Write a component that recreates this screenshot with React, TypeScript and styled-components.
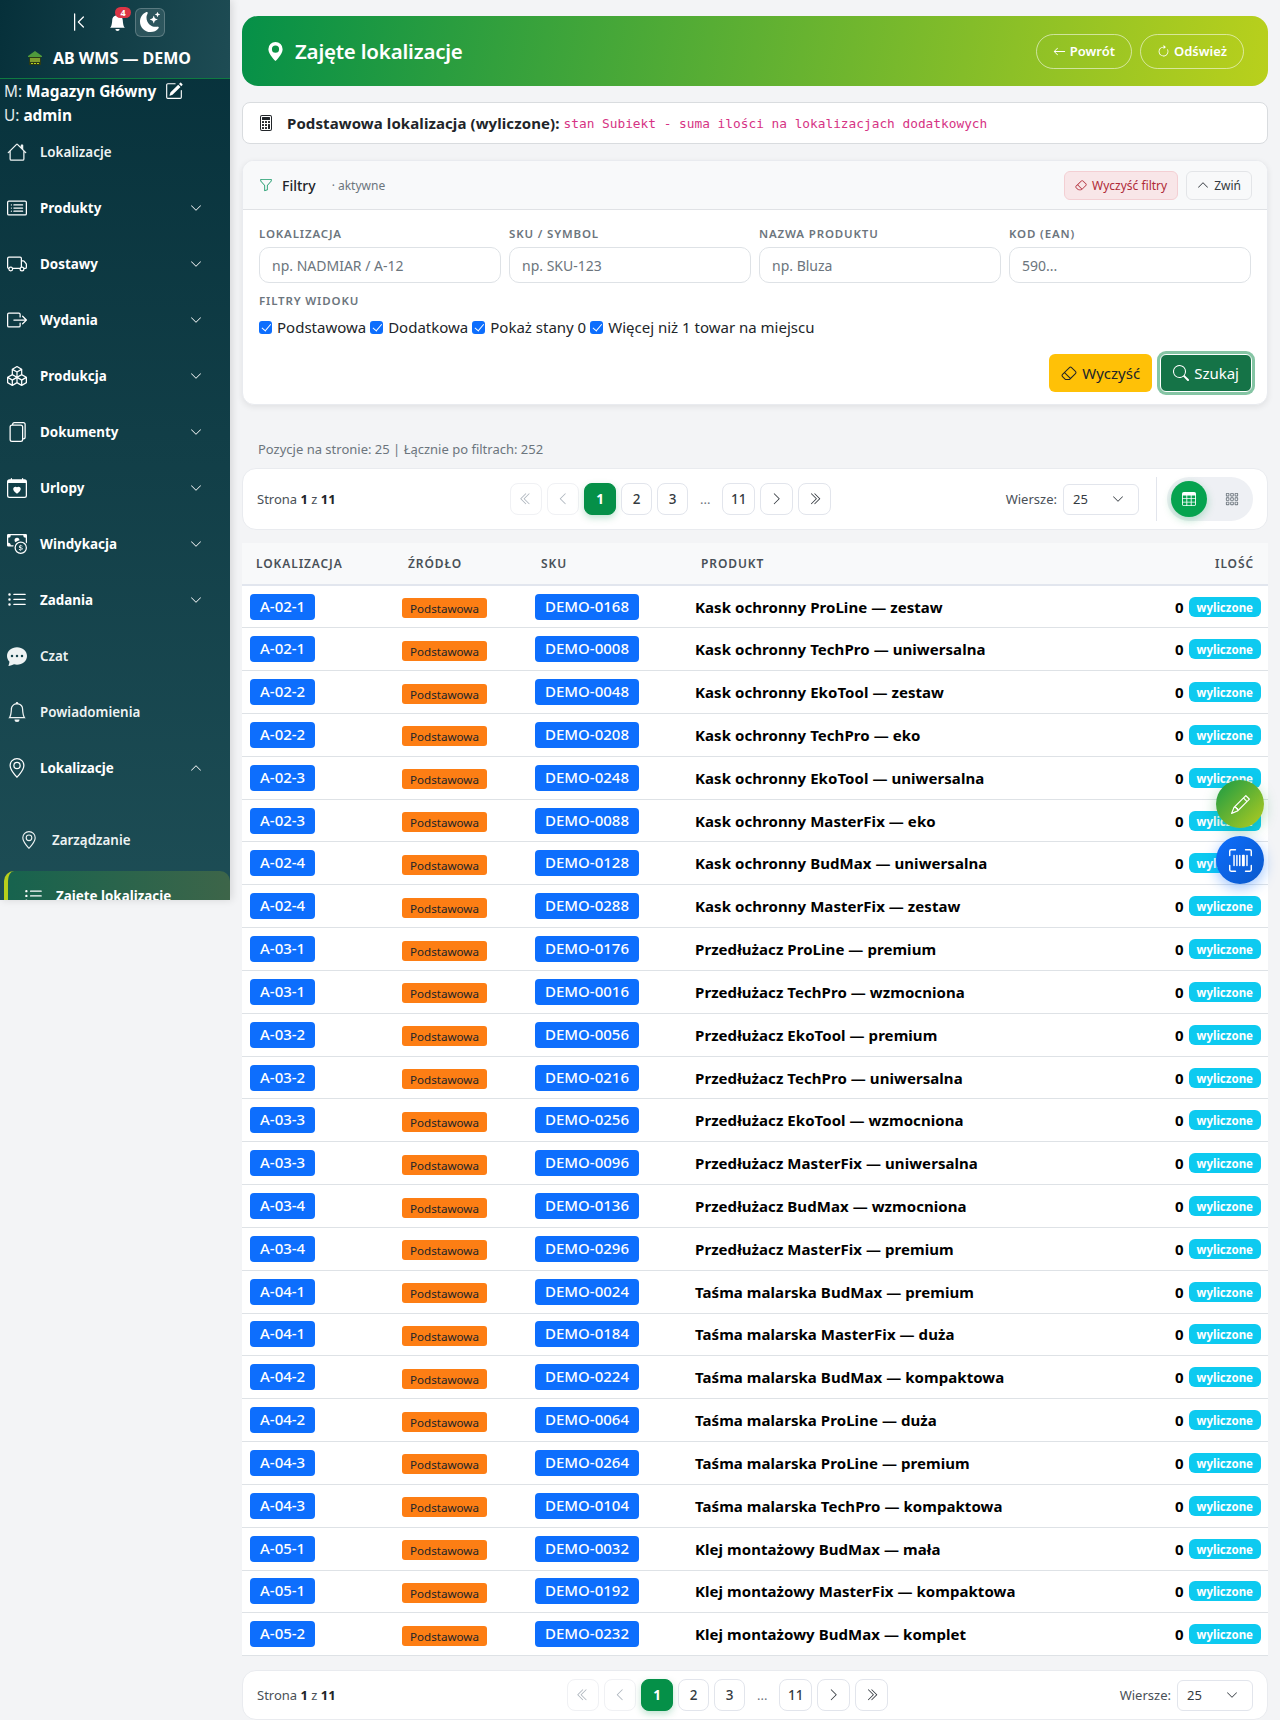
import React from 'react'
import styled, { createGlobalStyle } from 'styled-components'
import {
  BsArrowClockwise, BsArrowLeft, BsBell, BsBellFill, BsBoxArrowRight, BsBoxes, BsCalculator, BsCalendarHeart,
  BsCardList, BsCashCoin, BsChatDotsFill, BsChevronBarLeft, BsChevronDoubleLeft, BsChevronDoubleRight, BsChevronDown,
  BsChevronLeft, BsChevronRight, BsChevronUp, BsEraser, BsFiles, BsFunnel, BsGeoAlt, BsGeoAltFill, BsGrid3X3Gap,
  BsHouse, BsListUl, BsMoonStarsFill, BsPencil, BsPencilSquare, BsSearch, BsTable, BsTruck, BsUpcScan,
} from 'react-icons/bs'

const font = `'Noto Sans', 'Open Sans', Arial, sans-serif`

const GlobalStyle = createGlobalStyle`
  html, body { margin: 0; padding: 0; background: #f3f4f6; }
  body { font-family: ${font}; color: #212529; }
  * { box-sizing: border-box; }
`

const Page = styled.div`
  position: relative;
  width: 1280px;
  height: 1720px;
  overflow: hidden;
  padding: 16px 12px 0 242px;
  background: #f3f4f6;
`

const Sidebar = styled.aside`
  position: absolute;
  top: 0;
  left: 0;
  width: 230px;
  height: 900px;
  overflow: hidden;
  color: #fff;
  background: linear-gradient(180deg, #06303a 0%, #1d4d55 100%);
  box-shadow: 2px 0 8px rgba(0, 0, 0, 0.12);
`

const SideHead = styled.div`
  height: 79px;
  background: linear-gradient(100deg, #06303a 0%, #1e4c54 100%);
  border-bottom: 1px solid #0f7a41;
  display: flex;
  flex-direction: column;
  align-items: center;
`

const HeadTools = styled.div`
  display: flex;
  align-items: center;
  height: 44px;
  margin-left: 4px;
  font-size: 20px;
`

const Bell = styled.span`
  position: relative;
  display: flex;
  margin: 0 9px 0 20px;
  font-size: 17px;
`

const BellBadge = styled.span`
  position: absolute;
  top: -7px;
  left: 6px;
  min-width: 16px;
  height: 11px;
  border-radius: 7px;
  background: #dc3545;
  color: #fff;
  font-size: 9px;
  font-weight: 700;
  line-height: 11px;
  text-align: center;
`

const ThemeButton = styled.span`
  width: 30px;
  height: 29px;
  border-radius: 6px;
  border: 1px solid rgba(255, 255, 255, 0.22);
  background: rgba(255, 255, 255, 0.1);
  display: flex;
  align-items: center;
  justify-content: center;
  font-size: 20px;
`

const Brand = styled.div`
  display: flex;
  align-items: center;
  gap: 10px;
  font-size: 16px;
  font-weight: 700;
  margin: 3px 12px 0 0;
`

const UserLine = styled.div`
  display: flex;
  align-items: center;
  gap: 9px;
  padding-left: 4px;
  height: 24px;
  font-size: 15.4px;
  color: #e4ebec;
  b { color: #fff; font-weight: 700; }
  svg { font-size: 18px; color: #fff; }
`

const UserBlock = styled.div`
  height: 45px;
`

const MenuItem = styled.div<{ $bold?: boolean }>`
  display: flex;
  align-items: center;
  height: 56px;
  padding: 0 28px 0 7px;
  font-size: 13.4px;
  font-weight: ${(p) => (p.$bold ? 700 : 600)};
  color: ${(p) => (p.$bold ? '#fff' : '#eef3f3')};
`

const MenuIcon = styled.span`
  width: 20px;
  display: flex;
  justify-content: center;
  margin-right: 13px;
  font-size: 20px;
  flex: none;
`

const MenuLabel = styled.span`
  flex: 1;
`

const Chevron = styled.span`
  display: flex;
  font-size: 12px;
`

const SubItem = styled.div`
  display: flex;
  align-items: center;
  gap: 14px;
  height: 56px;
  margin-top: 16px;
  padding-left: 20px;
  font-size: 13.4px;
  font-weight: 600;
  color: #eef3f3;
  svg { font-size: 18px; }
`

const ActiveItem = styled.div`
  display: flex;
  align-items: center;
  gap: 13px;
  height: 60px;
  margin: 3px 0 0 4px;
  padding: 0 0 10px 16px;
  border-radius: 10px;
  border-left: 4px solid #b7cf1c;
  background: linear-gradient(90deg, #17634e 0%, #3d6549 100%);
  font-size: 13.4px;
  font-weight: 700;
  svg { font-size: 19px; }
`

const Banner = styled.header`
  height: 70px;
  border-radius: 16px;
  background: linear-gradient(100deg, #059048 0%, #b9d01c 100%);
  display: flex;
  align-items: center;
  justify-content: space-between;
  padding: 0 24px;
  color: #fff;
`

const BannerTitle = styled.h1`
  margin: 0;
  display: flex;
  align-items: center;
  gap: 10px;
  font-size: 20.5px;
  font-weight: 600;
  letter-spacing: -0.2px;
  svg { font-size: 19px; }
`

const BannerActions = styled.div`
  display: flex;
  gap: 8px;
`

const GhostButton = styled.span`
  height: 35px;
  border: 1px solid rgba(255, 255, 255, 0.55);
  border-radius: 18px;
  padding: 0 16px;
  display: flex;
  align-items: center;
  gap: 4px;
  font-size: 13px;
  font-weight: 600;
`

const Notice = styled.div`
  height: 42px;
  margin-top: 16px;
  border: 1px solid #d9dcdf;
  border-radius: 8px;
  background: #fff;
  display: flex;
  align-items: center;
  padding: 0 15px;
  font-size: 15px;
  font-weight: 700;
  letter-spacing: 0.09px;
  color: #212529;
  svg { font-size: 16px; margin-right: 13px; }
  code {
    font-family: 'DejaVu Sans Mono', monospace;
    font-size: 12.8px;
    font-weight: 400;
    letter-spacing: 0;
    color: #d63384;
    margin-left: 4px;
  }
`

const FilterCard = styled.section`
  height: 245px;
  margin-top: 16px;
  border-radius: 12px;
  background: #fff;
  border: 1px solid #e9ebef;
  box-shadow: 0 2px 6px rgba(0, 0, 0, 0.08);
  overflow: hidden;
`

const FilterHead = styled.div`
  height: 49px;
  background: #f8f9fa;
  border-bottom: 1px solid #e0e2e5;
  display: flex;
  align-items: center;
  padding: 0 15px 0 16px;
`

const FilterTitle = styled.span`
  display: flex;
  align-items: center;
  gap: 9px;
  font-size: 14px;
  font-weight: 500;
  svg { font-size: 14px; color: #1a9a6a; }
`

const FilterState = styled.span`
  flex: 1;
  margin-left: 16px;
  font-size: 12px;
  color: #6c757d;
`

const SmallButton = styled.span<{ $danger?: boolean }>`
  height: 29px;
  margin-left: 8px;
  padding: 0 10px;
  display: flex;
  align-items: center;
  gap: 5px;
  border-radius: 6px;
  font-size: 12px;
  color: ${(p) => (p.$danger ? '#b02a37' : '#343a40')};
  background: ${(p) => (p.$danger ? '#f8e6e8' : '#f8f9fa')};
  border: 1px solid ${(p) => (p.$danger ? '#f3cfd3' : '#e3e5e8')};
`

const FilterBody = styled.div`
  padding: 16px 16px 0;
`

const FieldGrid = styled.div`
  display: grid;
  grid-template-columns: repeat(4, 1fr);
  gap: 8px;
`

const FieldLabel = styled.div`
  font-size: 11.5px;
  font-weight: 600;
  letter-spacing: 0.85px;
  color: #6c757d;
  line-height: 15px;
  margin-bottom: 6px;
`

const FieldInput = styled.input`
  display: block;
  width: 100%;
  height: 36px;
  border: 1px solid #dee2e6;
  border-radius: 10px;
  padding: 0 12px;
  font-family: ${font};
  font-size: 14px;
  &::placeholder { color: #6c757d; opacity: 1; }
`

const ViewLabel = styled(FieldLabel)`
  margin: 10px 0 9px;
`

const CheckRow = styled.div`
  display: flex;
  align-items: center;
  gap: 4px;
  font-size: 15px;
  line-height: 20px;
`

const Check = styled.span`
  width: 13px;
  height: 13px;
  margin-right: 1px;
  border-radius: 3px;
  background: #0d6efd;
  position: relative;
  flex: none;
  &::after {
    content: '';
    position: absolute;
    left: 4.5px;
    top: 1.5px;
    width: 4px;
    height: 7.5px;
    border: solid #fff;
    border-width: 0 1.8px 1.8px 0;
    transform: rotate(40deg);
  }
`

const FilterActions = styled.div`
  display: flex;
  justify-content: flex-end;
  gap: 8px;
  margin: 17px -1px 0 0;
`

const SolidButton = styled.span<{ $bg: string; $fg: string; $focus?: boolean }>`
  height: 38px;
  padding: 0 12px;
  display: flex;
  align-items: center;
  gap: 5px;
  border-radius: 6px;
  font-size: 15px;
  background: ${(p) => p.$bg};
  color: ${(p) => p.$fg};
  box-shadow: ${(p) => (p.$focus ? '0 0 0 3px #85c5a4' : 'none')};
  ${(p) => (p.$focus ? 'border: 1px solid #fff;' : '')}
  svg { font-size: 16px; }
`

const InfoLine = styled.div`
  margin: 35px 0 0 16px;
  height: 19px;
  font-size: 13px;
  line-height: 19px;
  color: #6c757d;
`

const PagerCard = styled.div<{ $bottom?: boolean }>`
  height: ${(p) => (p.$bottom ? '50px' : '62px')};
  margin-top: ${(p) => (p.$bottom ? '14px' : '9px')};
  background: #fff;
  border: 1px solid #e9ebef;
  border-radius: 14px;
  display: flex;
  justify-content: space-between;
  align-items: center;
  padding: 0 14px;
`

const PageCount = styled.div`
  font-size: 13px;
  color: #495057;
  b { color: #212529; font-weight: 700; }
`

const Pages = styled.div`
  display: flex;
  align-items: center;
  gap: 5px;
`

const PageBtn = styled.span<{ $active?: boolean; $off?: boolean; $w?: number }>`
  width: ${(p) => p.$w ?? 32}px;
  height: 32px;
  border-radius: 8px;
  display: flex;
  align-items: center;
  justify-content: center;
  font-size: 13.5px;
  font-weight: ${(p) => (p.$active ? 700 : 500)};
  border: 1px solid ${(p) => (p.$active ? '#059048' : p.$off ? '#f0f1f4' : '#e2e5ec')};
  background: ${(p) => (p.$active ? '#059048' : '#fff')};
  color: ${(p) => (p.$active ? '#fff' : p.$off ? '#adb5bd' : '#343a40')};
  box-shadow: ${(p) => (p.$active ? '0 3px 7px rgba(5, 144, 72, 0.25)' : 'none')};
`

const Dots = styled.span`
  width: 24px;
  text-align: center;
  font-size: 13px;
  color: #6c757d;
`

const RowsCtl = styled.div`
  display: flex;
  align-items: center;
  gap: 6px;
  font-size: 13px;
  color: #495057;
`

const RowsSelect = styled.span`
  width: 76px;
  height: 31px;
  border: 1px solid #e2e5ec;
  border-radius: 6px;
  padding: 0 14px 0 9px;
  display: flex;
  align-items: center;
  justify-content: space-between;
  font-size: 13px;
  color: #343a40;
  svg { font-size: 12px; }
`

const Divider = styled.span`
  width: 1px;
  height: 44px;
  background: #e2e5ec;
  margin: 0 4px 0 11px;
`

const ViewToggle = styled.span`
  width: 86px;
  height: 44px;
  border-radius: 22px;
  background: #eef0f4;
  display: flex;
  align-items: center;
  padding-left: 4px;
`

const ViewActive = styled.span`
  width: 36px;
  height: 36px;
  border-radius: 50%;
  background: #06a34f;
  color: #fff;
  display: flex;
  align-items: center;
  justify-content: center;
  font-size: 14px;
  box-shadow: 0 3px 8px rgba(6, 163, 79, 0.3);
`

const ViewIdle = styled.span`
  width: 14px;
  margin-left: 18px;
  display: flex;
  font-size: 14px;
  color: #6c757d;
`

const Table = styled.table`
  width: 100%;
  margin-top: 13px;
  table-layout: fixed;
  border-collapse: collapse;
  background: #fff;
  th {
    height: 42px;
    background: #f8f9fa;
    border-bottom: 2px solid #e2e6ee;
    padding: 0 0 0 14px;
    font-size: 12px;
    font-weight: 600;
    letter-spacing: 0.9px;
    color: #495057;
    text-align: left;
  }
  td {
    height: 42.83px;
    padding: 0 0 0 8px;
    border-bottom: 1px solid #dee2e6;
  }
`

const CodeBadge = styled.span`
  display: inline-block;
  height: 26px;
  line-height: 25px;
  padding: 0 10px;
  border-radius: 4px;
  background: #0d6efd;
  color: #fff;
  font-size: 15px;
  font-weight: 500;
`

const SourceBadge = styled.span`
  display: inline-block;
  height: 20px;
  line-height: 21px;
  padding: 0 8px;
  margin-top: 3px;
  border-radius: 3px;
  background: #fd7e14;
  color: #212529;
  font-size: 11.6px;
`

const ProductName = styled.span`
  font-size: 15px;
  font-weight: 700;
  letter-spacing: 0.06px;
  color: #000;
`

const QtyCell = styled.div`
  display: flex;
  justify-content: flex-end;
  align-items: center;
  gap: 5px;
  padding-right: 7px;
  font-size: 15px;
  font-weight: 700;
  color: #000;
`

const CalcBadge = styled.span`
  height: 20px;
  line-height: 21px;
  padding: 0 8px;
  border-radius: 6px;
  background: #0dcaf0;
  color: #fff;
  font-size: 11.5px;
  font-weight: 700;
`

const Fab = styled.span<{ $top: number; $bg: string; $glow: string; $icon: number }>`
  position: absolute;
  left: 1216px;
  top: ${(p) => p.$top}px;
  width: 48px;
  height: 48px;
  border-radius: 50%;
  background: ${(p) => p.$bg};
  box-shadow: 0 4px 14px ${(p) => p.$glow};
  color: #fff;
  display: flex;
  align-items: center;
  justify-content: center;
  font-size: ${(p) => p.$icon}px;
`

const BrandIcon = () => (
  <svg width="16" height="16" viewBox="0 0 16 16">
    <path d="M1 6 8 1l7 5v1H1z" fill="#4f9a3c" />
    <rect x="2" y="7" width="12" height="8" fill="#2b3b16" />
    <rect x="3" y="8" width="10" height="4" fill="#7f9d2e" />
    <path d="M4 13.5h2M7 13.5h2M10 13.5h2" stroke="#b9d01c" strokeWidth="1" />
  </svg>
)

const menu = [
  { label: 'Lokalizacje', icon: <BsHouse />, bold: false, open: null },
  { label: 'Produkty', icon: <BsCardList />, bold: true, open: false },
  { label: 'Dostawy', icon: <BsTruck />, bold: true, open: false },
  { label: 'Wydania', icon: <BsBoxArrowRight />, bold: true, open: false },
  { label: 'Produkcja', icon: <BsBoxes />, bold: true, open: false },
  { label: 'Dokumenty', icon: <BsFiles />, bold: true, open: false },
  { label: 'Urlopy', icon: <BsCalendarHeart />, bold: true, open: false },
  { label: 'Windykacja', icon: <BsCashCoin />, bold: true, open: false },
  { label: 'Zadania', icon: <BsListUl />, bold: true, open: false },
  { label: 'Czat', icon: <BsChatDotsFill />, bold: false, open: null },
  { label: 'Powiadomienia', icon: <BsBell />, bold: false, open: null },
  { label: 'Lokalizacje', icon: <BsGeoAlt />, bold: true, open: true },
]

const rows = [
  ['A-02-1', 'DEMO-0168', 'Kask ochronny ProLine — zestaw'],
  ['A-02-1', 'DEMO-0008', 'Kask ochronny TechPro — uniwersalna'],
  ['A-02-2', 'DEMO-0048', 'Kask ochronny EkoTool — zestaw'],
  ['A-02-2', 'DEMO-0208', 'Kask ochronny TechPro — eko'],
  ['A-02-3', 'DEMO-0248', 'Kask ochronny EkoTool — uniwersalna'],
  ['A-02-3', 'DEMO-0088', 'Kask ochronny MasterFix — eko'],
  ['A-02-4', 'DEMO-0128', 'Kask ochronny BudMax — uniwersalna'],
  ['A-02-4', 'DEMO-0288', 'Kask ochronny MasterFix — zestaw'],
  ['A-03-1', 'DEMO-0176', 'Przedłużacz ProLine — premium'],
  ['A-03-1', 'DEMO-0016', 'Przedłużacz TechPro — wzmocniona'],
  ['A-03-2', 'DEMO-0056', 'Przedłużacz EkoTool — premium'],
  ['A-03-2', 'DEMO-0216', 'Przedłużacz TechPro — uniwersalna'],
  ['A-03-3', 'DEMO-0256', 'Przedłużacz EkoTool — wzmocniona'],
  ['A-03-3', 'DEMO-0096', 'Przedłużacz MasterFix — uniwersalna'],
  ['A-03-4', 'DEMO-0136', 'Przedłużacz BudMax — wzmocniona'],
  ['A-03-4', 'DEMO-0296', 'Przedłużacz MasterFix — premium'],
  ['A-04-1', 'DEMO-0024', 'Taśma malarska BudMax — premium'],
  ['A-04-1', 'DEMO-0184', 'Taśma malarska MasterFix — duża'],
  ['A-04-2', 'DEMO-0224', 'Taśma malarska BudMax — kompaktowa'],
  ['A-04-2', 'DEMO-0064', 'Taśma malarska ProLine — duża'],
  ['A-04-3', 'DEMO-0264', 'Taśma malarska ProLine — premium'],
  ['A-04-3', 'DEMO-0104', 'Taśma malarska TechPro — kompaktowa'],
  ['A-05-1', 'DEMO-0032', 'Klej montażowy BudMax — mała'],
  ['A-05-1', 'DEMO-0192', 'Klej montażowy MasterFix — kompaktowa'],
  ['A-05-2', 'DEMO-0232', 'Klej montażowy BudMax — komplet'],
]

const PageButtons = () => (
  <Pages>
    <PageBtn $off><BsChevronDoubleLeft /></PageBtn>
    <PageBtn $off><BsChevronLeft /></PageBtn>
    <PageBtn $active>1</PageBtn>
    <PageBtn $w={31}>2</PageBtn>
    <PageBtn $w={31}>3</PageBtn>
    <Dots>...</Dots>
    <PageBtn $w={33}>11</PageBtn>
    <PageBtn $w={33}><BsChevronRight /></PageBtn>
    <PageBtn $w={33}><BsChevronDoubleRight /></PageBtn>
  </Pages>
)

export default function App() {
  return (
    <Page>
      <GlobalStyle />
      <Sidebar>
        <SideHead>
          <HeadTools>
            <BsChevronBarLeft />
            <Bell>
              <BsBellFill />
              <BellBadge>4</BellBadge>
            </Bell>
            <ThemeButton><BsMoonStarsFill /></ThemeButton>
          </HeadTools>
          <Brand><BrandIcon />AB WMS — DEMO</Brand>
        </SideHead>
        <UserBlock>
          <UserLine><span>M: <b>Magazyn Główny</b></span><BsPencilSquare /></UserLine>
          <UserLine><span>U: <b>admin</b></span></UserLine>
        </UserBlock>
        {menu.map((m, i) => (
          <MenuItem key={i} $bold={m.bold}>
            <MenuIcon>{m.icon}</MenuIcon>
            <MenuLabel>{m.label}</MenuLabel>
            {m.open !== null && <Chevron>{m.open ? <BsChevronUp /> : <BsChevronDown />}</Chevron>}
          </MenuItem>
        ))}
        <SubItem><BsGeoAlt />Zarządzanie</SubItem>
        <ActiveItem><BsListUl />Zajęte lokalizacje</ActiveItem>
      </Sidebar>

      <Banner>
        <BannerTitle><BsGeoAltFill />Zajęte lokalizacje</BannerTitle>
        <BannerActions>
          <GhostButton><BsArrowLeft />Powrót</GhostButton>
          <GhostButton><BsArrowClockwise />Odśwież</GhostButton>
        </BannerActions>
      </Banner>

      <Notice>
        <BsCalculator />
        Podstawowa lokalizacja (wyliczone):
        <code>stan Subiekt - suma ilości na lokalizacjach dodatkowych</code>
      </Notice>

      <FilterCard>
        <FilterHead>
          <FilterTitle><BsFunnel />Filtry</FilterTitle>
          <FilterState>· aktywne</FilterState>
          <SmallButton $danger><BsEraser />Wyczyść filtry</SmallButton>
          <SmallButton><BsChevronUp />Zwiń</SmallButton>
        </FilterHead>
        <FilterBody>
          <FieldGrid>
            <div><FieldLabel>LOKALIZACJA</FieldLabel><FieldInput placeholder="np. NADMIAR / A-12" /></div>
            <div><FieldLabel>SKU / SYMBOL</FieldLabel><FieldInput placeholder="np. SKU-123" /></div>
            <div><FieldLabel>NAZWA PRODUKTU</FieldLabel><FieldInput placeholder="np. Bluza" /></div>
            <div><FieldLabel>KOD (EAN)</FieldLabel><FieldInput placeholder="590..." /></div>
          </FieldGrid>
          <ViewLabel>FILTRY WIDOKU</ViewLabel>
          <CheckRow>
            <Check />Podstawowa
            <Check />Dodatkowa
            <Check />Pokaż stany 0
            <Check />Więcej niż 1 towar na miejscu
          </CheckRow>
          <FilterActions>
            <SolidButton $bg="#ffc107" $fg="#212529"><BsEraser />Wyczyść</SolidButton>
            <SolidButton $bg="#157347" $fg="#fff" $focus><BsSearch />Szukaj</SolidButton>
          </FilterActions>
        </FilterBody>
      </FilterCard>

      <InfoLine>Pozycje na stronie: 25 | Łącznie po filtrach: 252</InfoLine>

      <PagerCard>
        <PageCount>Strona <b>1</b> z <b>11</b></PageCount>
        <PageButtons />
        <RowsCtl>
          Wiersze:
          <RowsSelect>25<BsChevronDown /></RowsSelect>
          <Divider />
          <ViewToggle>
            <ViewActive><BsTable /></ViewActive>
            <ViewIdle><BsGrid3X3Gap /></ViewIdle>
          </ViewToggle>
        </RowsCtl>
      </PagerCard>

      <Table>
        <colgroup>
          <col style={{ width: 152 }} />
          <col style={{ width: 133 }} />
          <col style={{ width: 160 }} />
          <col />
          <col style={{ width: 200 }} />
        </colgroup>
        <thead>
          <tr>
            <th>LOKALIZACJA</th>
            <th>ŹRÓDŁO</th>
            <th>SKU</th>
            <th>PRODUKT</th>
            <th style={{ textAlign: 'right', paddingRight: 14 }}>ILOŚĆ</th>
          </tr>
        </thead>
        <tbody>
          {rows.map((r, i) => (
            <tr key={i}>
              <td><CodeBadge>{r[0]}</CodeBadge></td>
              <td><SourceBadge>Podstawowa</SourceBadge></td>
              <td><CodeBadge>{r[1]}</CodeBadge></td>
              <td><ProductName>{r[2]}</ProductName></td>
              <td><QtyCell>0<CalcBadge>wyliczone</CalcBadge></QtyCell></td>
            </tr>
          ))}
        </tbody>
      </Table>

      <PagerCard $bottom>
        <PageCount>Strona <b>1</b> z <b>11</b></PageCount>
        <PageButtons />
        <RowsCtl>
          Wiersze:
          <RowsSelect>25<BsChevronDown /></RowsSelect>
        </RowsCtl>
      </PagerCard>

      <Fab $top={780} $icon={19} $bg="linear-gradient(135deg, #189a45, #b4cc1f)" $glow="rgba(24, 154, 69, 0.35)"><BsPencil /></Fab>
      <Fab $top={836} $icon={23} $bg="linear-gradient(135deg, #0d6efd, #0a58ca)" $glow="rgba(13, 110, 253, 0.4)"><BsUpcScan /></Fab>
    </Page>
  )
}
